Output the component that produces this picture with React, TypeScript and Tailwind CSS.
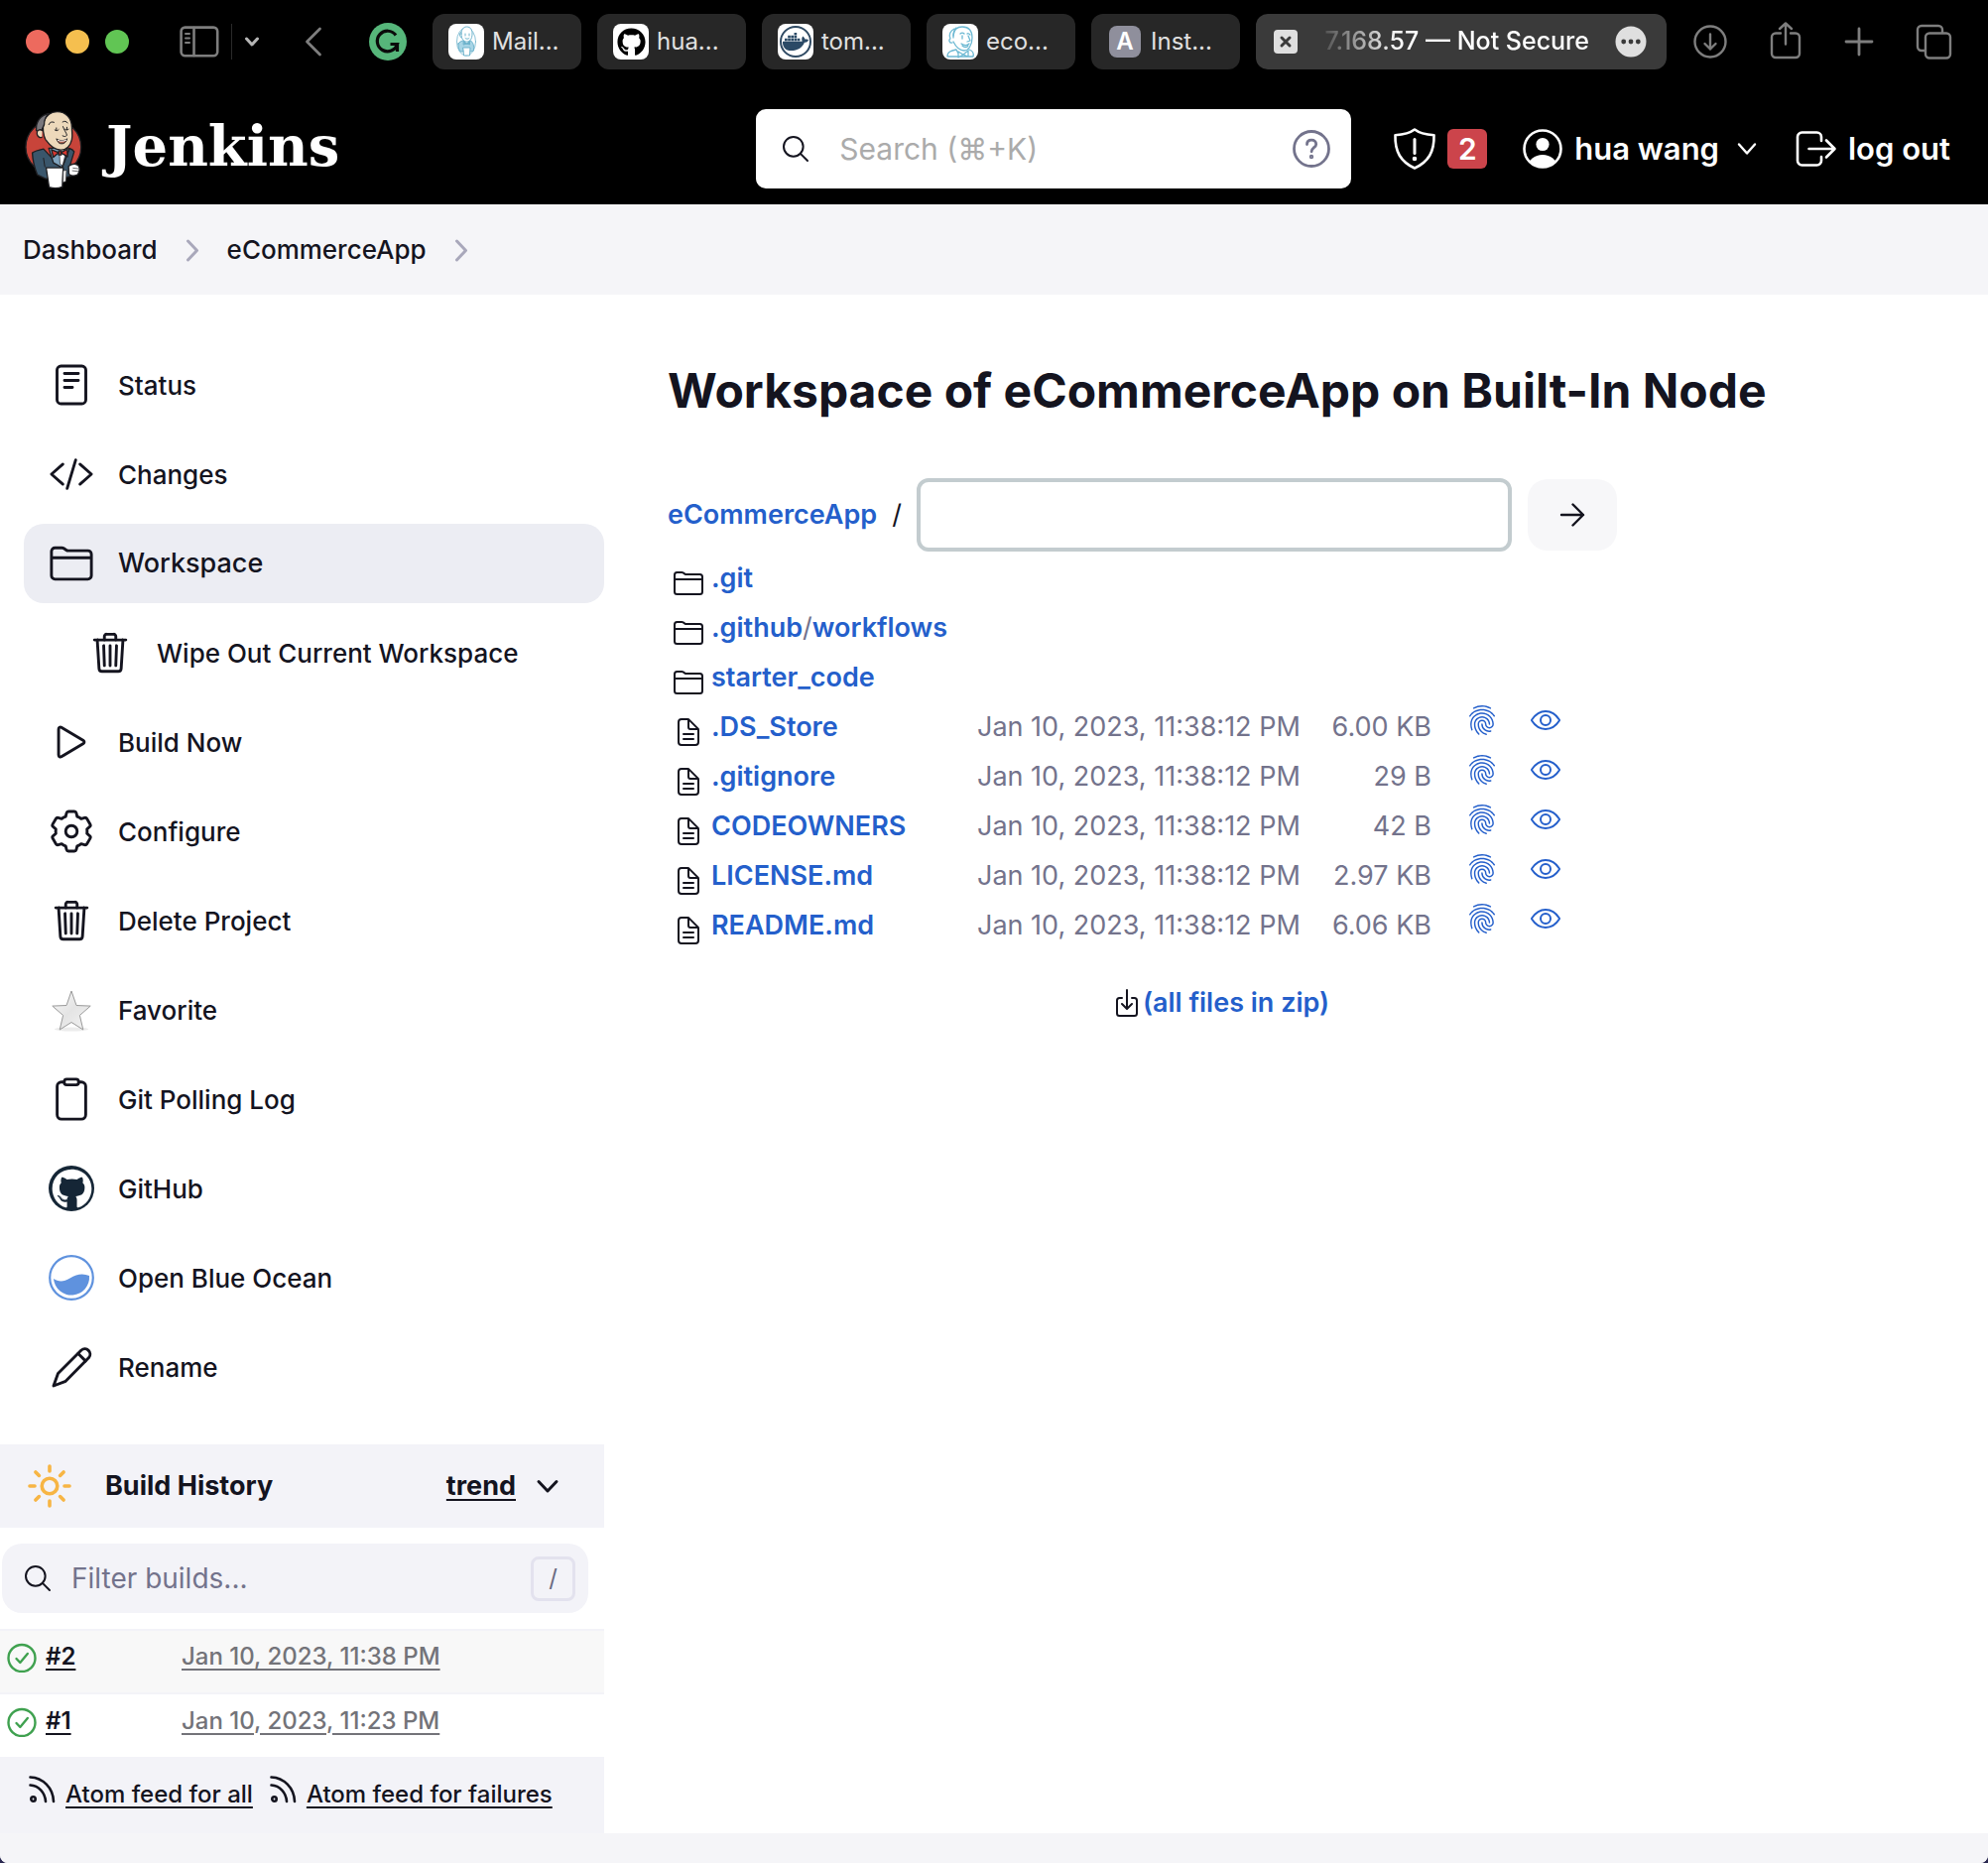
import React from "react";
import {
  IoClipboardOutline,
  IoCodeSlashOutline,
  IoDocumentTextOutline,
  IoDownloadOutline,
  IoEyeOutline,
  IoFingerPrintOutline,
  IoFolderOutline,
  IoPlayOutline,
  IoSearchOutline,
  IoTrashOutline,
} from "react-icons/io5";
import { FaDocker, FaGithub } from "react-icons/fa";

type LineIconProps = {
  box: string;
  stroke?: number;
  className: string;
  children: React.ReactNode;
};

function LineIcon({ box, stroke = 2, className, children }: LineIconProps) {
  return (
    <svg
      viewBox={box}
      className={className}
      fill="none"
      stroke="currentColor"
      strokeWidth={stroke}
      strokeLinecap="round"
      strokeLinejoin="round"
      aria-hidden="true"
    >
      {children}
    </svg>
  );
}

/* ---------- Browser toolbar ---------- */

function ButlerSketchFavicon() {
  return (
    <LineIcon box="0 0 36 36" stroke={1} className="size-9 text-[#6db3cc]">
      <ellipse cx="18" cy="18" rx="9.5" ry="14" strokeWidth=".8" />
      <path d="M13 10c0-4 2-7 5.500-7 4 0 5.500 3 5.500 7 0 5-2 8-5.500 8S13 15 13 10z" fill="#fff" />
      <path d="M13 8c-2 1-2 5 0 6M17 10v2M21 10v2M17 14.500c1 1 3 1 4 0" />
      <path d="M10 20c1-2 4-3 5-3l3.500 3 3.500-3c3 1 4 5 3.500 10l-3 1H12c-2-3-2-5-2-8z" fill="#a8d5e6" />
      <path d="M15 24h7l-.5 8h-5.500z" fill="#fff" />
      <path d="M15.500 18l3 2 3-2v3l-3-1-3 1z" fill="#6db3cc" />
    </LineIcon>
  );
}

function ButlerHeadFavicon() {
  return (
    <LineIcon box="0 0 36 36" stroke={1.3} className="size-9 text-[#6db9d3]">
      <path d="M11 12c0-6 4-9 9-9 7 0 10 4 10 11 0 8-4 13-8 13-6 0-9-5-11-9" />
      <path d="M12 5c-4 2-6 6-4 10-2 1-1 5 2 4M14 4c-3 3-3 6-3 10" />
      <path d="M18 10c1-1 3-1 4 0M25 10c1-1 2 0 3 1M20 12v3M26 12l2 5-3 1M19 20c3 2 6 2 8 0M20 22c2 2 5 2 6 0" />
      <path d="M5 33c0-5 4-6 9-7l2 4M5 33h26c1-4-1-6-4-7M16 28l5 3 5-4v6l-5-2-5 3z" />
    </LineIcon>
  );
}

function DockerFavicon() {
  return (
    <span className="flex size-8 items-center justify-center rounded-full border-2 border-[#2f4a63]">
      <FaDocker className="size-[26px] text-[#2b4a66]" />
    </span>
  );
}

const tabs = [
  { label: "Mail...", icon: <ButlerSketchFavicon /> },
  { label: "hua...", icon: <FaGithub className="size-[29px] text-black" /> },
  { label: "tom...", icon: <DockerFavicon /> },
  { label: "eco...", icon: <ButlerHeadFavicon /> },
];

function BrowserBar() {
  return (
    <div className="flex items-center bg-black pt-3.5 pr-9 pb-6 pl-[26px] text-[#7e7e7e]">
      <div className="flex gap-4">
        <button type="button" aria-label="Close window" className="size-6 rounded-full bg-[#ed6a5e]" />
        <button type="button" aria-label="Minimize window" className="size-6 rounded-full bg-[#f5bf4f]" />
        <button type="button" aria-label="Zoom window" className="size-6 rounded-full bg-[#61c554]" />
      </div>
      <button type="button" aria-label="Sidebar" className="ml-[51px]">
        <LineIcon box="0 0 40 32" stroke={2.6} className="h-8 w-10">
          <rect x="1.6" y="1.6" width="36.6" height="28.6" rx="4" />
          <path d="M14.5 2v28" />
          <path d="M6 8h4M6 12.5h4M6 17h4" strokeWidth="2" />
        </LineIcon>
      </button>
      <span className="ml-3 h-9 w-px bg-[#2a2a2a]" />
      <button type="button" aria-label="Tab groups" className="ml-3 text-[#b5b5b5]">
        <LineIcon box="0 0 16 16" stroke={3} className="size-4">
          <path d="M2.5 5l5.5 6 5.5-6" />
        </LineIcon>
      </button>
      <button type="button" aria-label="Back" className="ml-11">
        <LineIcon box="0 0 20 32" stroke={2.8} className="h-8 w-5">
          <path d="M16.5 3L3.500 16l13 13" />
        </LineIcon>
      </button>
      <button type="button" aria-label="Grammar extension" className="ml-[46px]">
        <svg viewBox="0 0 38 38" className="size-[38px]" aria-hidden="true">
          <circle cx="19" cy="19" r="19" fill="#56b67a" />
          <path
            d="M27 12.500A10.300 10.300 0 1 0 28.500 21.500h-7M28.500 21.500v7.500"
            fill="none"
            stroke="#0a0a0a"
            strokeWidth="3.200"
          />
        </svg>
      </button>
      <div className="ml-[26px] flex flex-1 gap-4">
        {tabs.map((tab) => (
          <button
            key={tab.label}
            type="button"
            className="flex h-14 w-[150px] items-center gap-2 rounded-xl bg-[#272727] pl-4 text-2xl text-[#e0e0e0]"
          >
            <span className="flex size-9 items-center justify-center overflow-hidden rounded-lg bg-white">
              {tab.icon}
            </span>
            {tab.label}
          </button>
        ))}
        <button
          type="button"
          className="flex h-14 w-[150px] items-center gap-2.5 rounded-xl bg-[#272727] pl-[18px] text-2xl text-[#e0e0e0]"
        >
          <span className="flex size-8 items-center justify-center rounded-lg bg-[#8f8f9c] text-2xl font-semibold text-white">
            A
          </span>
          Inst...
        </button>
        <div className="flex h-14 min-w-0 flex-1 items-center rounded-xl bg-[#3a3a3a] pr-5 pl-[18px]">
          <button
            type="button"
            aria-label="Close tab"
            className="flex size-6 items-center justify-center rounded-sm bg-[#dfdfdf] text-[#3a3a3a]"
          >
            <LineIcon box="0 0 16 16" stroke={3} className="size-4">
              <path d="M4 4l8 8M12 4l-8 8" />
            </LineIcon>
          </button>
          <span className="flex-1 [mask-image:linear-gradient(to_right,transparent_5%,black_32%)] pr-[26px] text-right text-[25px] font-medium whitespace-nowrap text-white">
            7.168.57 — Not Secure
          </span>
          <button type="button" aria-label="Page menu">
            <svg viewBox="0 0 32 32" className="size-8" aria-hidden="true">
              <circle cx="16" cy="16" r="15.5" fill="#dfdfdf" />
              <g fill="#3a3a3a">
                <circle cx="8.7" cy="16" r="2.4" />
                <circle cx="16" cy="16" r="2.4" />
                <circle cx="23.3" cy="16" r="2.4" />
              </g>
            </svg>
          </button>
        </div>
      </div>
      <div className="ml-[26px] flex items-center gap-10">
        <button type="button" aria-label="Downloads">
          <LineIcon box="0 0 36 36" stroke={2.4} className="size-9">
            <circle cx="18" cy="18" r="15.5" />
            <path d="M18 10.5v15M12.5 20l5.5 5.5 5.5-5.5" />
          </LineIcon>
        </button>
        <button type="button" aria-label="Share">
          <LineIcon box="0 0 36 40" stroke={2.4} className="h-10 w-9">
            <path d="M13 11.5H8a4 4 0 0 0-4 4V32a4 4 0 0 0 4 4h20a4 4 0 0 0 4-4V15.500a4 4 0 0 0-4-4h-5M18 22.500V1.500M12 7L18 1.500 24 7" />
          </LineIcon>
        </button>
        <button type="button" aria-label="New tab">
          <LineIcon box="0 0 32 32" stroke={2.8} className="size-8">
            <path d="M16 3v26M3 16h26" />
          </LineIcon>
        </button>
        <button type="button" aria-label="Tab overview">
          <LineIcon box="0 0 38 38" stroke={2.4} className="size-[38px]">
            <rect x="11" y="10.500" width="25" height="25" rx="4" />
            <path d="M10.500 28H7a4 4 0 0 1-4-4V7a4 4 0 0 1 4-4h17a4 4 0 0 1 4 4v3" />
          </LineIcon>
        </button>
      </div>
    </div>
  );
}

/* ---------- Jenkins header ---------- */

function JenkinsButler() {
  return (
    <svg viewBox="25 27 176 244" className="h-[81px] w-[59px]" aria-hidden="true">
      <g stroke="#1f1f22" strokeWidth="4" strokeLinejoin="round" strokeLinecap="round">
        <ellipse cx="114" cy="142" rx="84" ry="82" fill="#c8443a" />
        <path d="M50 160c8-6 20-9 34-12l56 60 22-62c6 2 12 5 15 10l-12 40 2 34-30 8H90l-25-12c-8-20-14-44-15-66z" fill="#3a566b" />
        <path d="M100 146l14 44 26 14 22-56-20-4z" fill="#7fa3bd" />
        <path d="M132 150l2 44 8 4 8-32-6-16z" fill="#fff" strokeWidth="2" />
        <path d="M84 66c8-20 24-31 42-31 26 0 44 20 44 48 0 14 3 24 0 36-4 18-16 33-34 32-22-1-36-18-46-32-6-10-10-36-6-53z" fill="#edd9bb" />
        <path d="M62 92c-2-26 12-46 38-52-12 12-14 22-14 34l-10 22z" fill="#79777c" />
        <path d="M80 92c-8-6-17 0-16 9 1 8 8 15 15 11" fill="#edd9bb" />
        <path d="M100 74c2-7 9-10 16-7M142 66c6-4 12-2 15 3M118 90c4 4 9 3 12-1M123 84v7M149 88c4 3 8 2 11 0M155 82v8M143 80c3 10 10 18 12 26-3 5-8 5-13 2" fill="none" strokeWidth="3" />
        <path d="M124 118c10 6 22 6 32-1-3 10-10 16-18 15-7 0-11-5-14-14z" fill="#a9604f" strokeWidth="3" />
        <path d="M128 122c8 3 18 3 25-1" fill="none" stroke="#fff" strokeWidth="3" />
        <path d="M108 150l22 9-16 14zM156 149l-20 10 21 12zM130 154h8v12h-8z" fill="#d8372f" />
        <path d="M92 205h52l-3 58c-12 5-28 5-40 1z" fill="#fff" />
        <path d="M144 214l10-2-2 34-9 4z" fill="#e4e4e4" strokeWidth="2" />
        <path d="M160 200c12-8 24-8 31 0 4 8 2 18-4 26-10 5-20 3-26-2z" fill="#fff" />
        <path d="M174 206l16 2M172 214l17 2" fill="none" strokeWidth="2" />
        <path d="M84 176l4 26" fill="none" strokeWidth="3" />
      </g>
    </svg>
  );
}

function Header() {
  return (
    <header className="flex h-28 items-center bg-black pr-[38px] pl-6 text-white">
      <a href="#home" className="flex items-center gap-6">
        <JenkinsButler />
        <span className="pb-1.5 font-['DejaVu_Serif',serif] text-[56px] leading-none font-bold">Jenkins</span>
      </a>
      <label className="ml-auto flex h-20 w-[600px] items-center rounded-[10px] bg-white px-5">
        <IoSearchOutline className="mx-1 size-8 text-[#14141f]" aria-hidden="true" />
        <input
          type="search"
          aria-label="Search"
          placeholder="Search (⌘+K)"
          className="ml-6 min-w-0 flex-1 bg-transparent text-3xl outline-none placeholder:text-[#ababab] placeholder:opacity-100"
        />
        <LineIcon box="0 0 40 40" stroke={2.8} className="size-10 text-[#73738c]">
          <circle cx="20" cy="20" r="17.5" />
          <path d="M15.5 15.500c0-2.800 2-4.300 4.600-4.300s4.600 1.600 4.600 4.200c0 3.200-4.600 3.500-4.600 7.400" />
          <circle cx="20" cy="28" r=".8" fill="currentColor" />
        </LineIcon>
      </label>
      <div className="ml-[42px] flex items-center gap-[11px]">
        <a href="#security" aria-label="Security warnings">
          <LineIcon box="0 0 44 44" stroke={2.6} className="size-11">
            <path d="M22 2.500c5 3.800 12 5.200 19.500 5.800C42 25 36 35 22 41.500 8 35 2 25 2.500 8.300 10 7.700 17 6.300 22 2.500z" />
            <path d="M22 12.500v14" strokeWidth="3" />
            <circle cx="22" cy="32" r="1" fill="currentColor" />
          </LineIcon>
        </a>
        <span className="flex size-10 items-center justify-center rounded-md bg-[#cc444b] text-3xl font-semibold">2</span>
      </div>
      <a href="#user" className="ml-9 flex items-center gap-3 text-[31px] font-semibold">
        <svg viewBox="0 0 40 40" className="size-10" aria-hidden="true">
          <defs>
            <clipPath id="avatar-ring">
              <circle cx="20" cy="20" r="18.5" />
            </clipPath>
          </defs>
          <circle cx="20" cy="20" r="18.5" fill="none" stroke="#fff" strokeWidth="2.6" />
          <circle cx="20" cy="15.5" r="6.6" fill="#fff" />
          <ellipse cx="20" cy="38" rx="14.5" ry="12" fill="#fff" clipPath="url(#avatar-ring)" />
        </svg>
        hua wang
      </a>
      <button type="button" aria-label="User menu" className="ml-4">
        <LineIcon box="0 0 24 24" stroke={2.4} className="size-6">
          <path d="M4 7.500l8 9 8-9" />
        </LineIcon>
      </button>
      <a href="#logout" className="ml-9 flex items-center gap-2.5 text-[31px] font-semibold">
        <LineIcon box="0 0 44 40" stroke={2.6} className="h-10 w-11">
          <path d="M27 12V8a4.500 4.500 0 0 0-4.500-4.500h-15A4.500 4.500 0 0 0 3 8v24a4.500 4.500 0 0 0 4.500 4.500h15A4.500 4.500 0 0 0 27 32v-4M14.500 20H40M32 11.500l8.500 8.500-8.500 8.500" />
        </LineIcon>
        log out
      </a>
    </header>
  );
}

function Crumbs() {
  const arrow = (
    <LineIcon box="0 0 20 32" stroke={3} className="h-8 w-5 text-[#a9a8bb]">
      <path d="M5.500 7l9 9.500-9 9.500" />
    </LineIcon>
  );
  return (
    <nav
      aria-label="Breadcrumb"
      className="flex h-[91px] items-center gap-[25px] bg-[#f5f5f8] pl-[23px] text-[26px] font-[450]"
    >
      <a href="#dashboard">Dashboard</a>
      {arrow}
      <a href="#project">eCommerceApp</a>
      {arrow}
    </nav>
  );
}

/* ---------- Side panel ---------- */

function StatusIcon() {
  return (
    <LineIcon box="0 0 46 46" stroke={2.9} className="size-[46px]">
      <rect x="8.500" y="4" width="29" height="38" rx="4" />
      <path d="M16 11.500h14M16 18.500h14M16 25.500h8" />
    </LineIcon>
  );
}

function GearIcon() {
  return (
    <LineIcon box="0 0 46 46" stroke={2.9} className="size-[46px]">
      <path d="M20 3h6q1.500 0 1.900 1.500L28.800 8.100q2.200.8 4 2.300L36.300 9.400q1.500-.4 2.300.9L41.900 15.900q.8 1.400-.4 2.400L38.700 20.900q.3 2.100 0 4.200L41.500 27.700q1.200 1 .4 2.400L38.600 35.700q-.8 1.300-2.300.9L32.800 35.600q-1.800 1.500-4 2.300L27.900 41.500q-.4 1.500-1.900 1.500H20q-1.500 0-1.900-1.500L17.200 37.900q-2.200-.8-4-2.300L9.700 36.600q-1.500.4-2.300-.9L4.100 30.100q-.8-1.400.4-2.400L7.300 25.100q-.3-2.100 0-4.200L4.500 18.300q-1.200-1-.4-2.400L7.400 10.300q.8-1.300 2.300-.9L13.200 10.400q1.800-1.500 4-2.300L18.100 4.500Q18.500 3 20 3z" />
      <circle cx="23" cy="23" r="5.800" />
    </LineIcon>
  );
}

function StarIcon() {
  return (
    <svg viewBox="0 0 46 46" className="size-[46px]" aria-hidden="true">
      <defs>
        <linearGradient id="star-fill" x1="0" y1="0" x2="1" y2="1">
          <stop offset="0" stopColor="#fafafa" />
          <stop offset="0.5" stopColor="#e4e4e4" />
          <stop offset="1" stopColor="#f4f4f4" />
        </linearGradient>
      </defs>
      <ellipse cx="23" cy="42.500" rx="17" ry="2" fill="#ececec" />
      <path
        d="M23 4l5 14.500 14.200.6-10.800 9.400 3.400 14.500-11.800-7.500L11.200 43l3.400-14.500L3.800 19.100l14.200-.6z"
        fill="url(#star-fill)"
        stroke="#9a9a9a"
        strokeWidth="1"
      />
    </svg>
  );
}

function GitHubRingIcon() {
  return (
    <span className="flex size-[46px] items-center justify-center rounded-full bg-[#152636]">
      <FaGithub className="size-[41px] text-white" />
    </span>
  );
}

function BlueOceanIcon() {
  return (
    <svg viewBox="0 0 46 46" className="size-[46px]" aria-hidden="true">
      <circle cx="23" cy="23" r="21.800" fill="none" stroke="#5f92de" strokeWidth="2.200" />
      <path d="M5 24c4.500 3 10 3.500 16.500-.5 7-4.500 13.500-5 19.500-2.500A17 17 0 0 1 5 24z" fill="#5f92de" />
    </svg>
  );
}

function PencilIcon() {
  return (
    <LineIcon box="0 0 46 46" stroke={2.9} className="size-[46px]">
      <path d="M5 42l4.500-12.500L33 6a5.400 5.400 0 0 1 7.600 7.600L17.200 37.300z" />
      <path d="M29.800 9.500l7.400 7.400" />
    </LineIcon>
  );
}

type Task = { label: string; icon: React.ReactNode; active?: boolean; nested?: boolean };

const tasks: Task[] = [
  { label: "Status", icon: <StatusIcon /> },
  { label: "Changes", icon: <IoCodeSlashOutline className="size-[46px]" /> },
  { label: "Workspace", icon: <IoFolderOutline className="size-[46px]" />, active: true },
  { label: "Wipe Out Current Workspace", icon: <IoTrashOutline className="size-[46px]" />, nested: true },
  { label: "Build Now", icon: <IoPlayOutline className="size-[46px]" /> },
  { label: "Configure", icon: <GearIcon /> },
  { label: "Delete Project", icon: <IoTrashOutline className="size-[46px]" /> },
  { label: "Favorite", icon: <StarIcon /> },
  { label: "Git Polling Log", icon: <IoClipboardOutline className="size-[46px]" /> },
  { label: "GitHub", icon: <GitHubRingIcon /> },
  { label: "Open Blue Ocean", icon: <BlueOceanIcon /> },
  { label: "Rename", icon: <PencilIcon /> },
];

function TaskList() {
  return (
    <nav aria-label="Project" className="flex flex-col gap-2.5 pl-6 text-[26px] font-[450]">
      {tasks.map((task) => (
        <a
          key={task.label}
          href="#task"
          aria-current={task.active ? "page" : undefined}
          className={
            "flex h-20 items-center gap-6 rounded-[20px] " +
            (task.active
              ? "bg-[#ecedf3] pl-[25px] text-[27px] font-medium"
              : task.nested
                ? "pl-16"
                : "pl-[25px]")
          }
        >
          {task.icon}
          {task.label}
        </a>
      ))}
    </nav>
  );
}

function RssIcon() {
  return (
    <LineIcon box="0 0 28 30" stroke={2.6} className="h-[30px] w-7">
      <circle cx="5.500" cy="24.500" r="2.200" />
      <path d="M2.500 10.500C11 11 17.500 18 18 27M2.500 2.500C15 3 25.500 13 26 27" />
    </LineIcon>
  );
}

const builds = [
  { id: "#2", date: "Jan 10, 2023, 11:38 PM" },
  { id: "#1", date: "Jan 10, 2023, 11:23 PM" },
];

function BuildHistory() {
  return (
    <section aria-label="Build History" className="mt-[38px]">
      <div className="flex h-[84px] items-center bg-[#f3f3f8] pr-[43px] pl-7 text-[27px] font-bold">
        <LineIcon box="0 0 44 44" stroke={3.6} className="size-11 text-[#f7b544]">
          <circle cx="22" cy="22" r="7.800" />
          <path d="M22 2v5M22 37v5M2 22h5M37 22h5M7.900 7.900l3.500 3.500M32.600 32.600l3.500 3.500M36.100 7.900l-3.500 3.500M11.400 32.600l-3.500 3.500" />
        </LineIcon>
        <h2 className="ml-[34px]">Build History</h2>
        <a href="#trend" className="ml-auto underline decoration-2 underline-offset-4">
          trend
        </a>
        <button type="button" aria-label="Collapse build history" className="ml-[18px]">
          <LineIcon box="0 0 28 28" stroke={3} className="size-7">
            <path d="M5 9.500l9 9.500 9-9.500" />
          </LineIcon>
        </button>
      </div>
      <label className="mt-4 mr-4 mb-4 ml-0.5 flex h-[70px] items-center rounded-[20px] bg-[#f3f3f8] pr-[13px] pl-5">
        <IoSearchOutline className="size-8" aria-hidden="true" />
        <input
          type="search"
          aria-label="Filter builds"
          placeholder="Filter builds..."
          className="ml-[18px] min-w-0 flex-1 bg-transparent text-[28px] outline-none placeholder:text-[#73738c] placeholder:opacity-100"
        />
        <kbd className="flex h-[45px] w-[45px] items-center justify-center rounded-lg border-3 border-[#e3e2ee] font-[Inter,sans-serif] text-2xl text-[#6a6a80]">
          /
        </kbd>
      </label>
      <table className="w-full text-left text-2xl">
        <tbody>
          {builds.map((build) => (
            <tr key={build.id} className="h-16 border-t-2 border-[#f3f3f8] odd:bg-[#f8f8f8]">
              <td className="w-[183px] pb-2.5 pl-1.5">
                <a href="#build" className="flex items-center gap-2">
                  <LineIcon box="0 0 32 32" stroke={2.4} className="size-8 text-[#3fa14f]">
                    <circle cx="16" cy="17.500" r="13.5" />
                    <path d="M10.500 18l3.800 4 7.500-9" />
                  </LineIcon>
                  <span className="font-semibold underline decoration-2 underline-offset-4">{build.id}</span>
                </a>
              </td>
              <td className="pb-2.5">
                <a href="#build" className="font-medium text-[#737379] underline decoration-2 underline-offset-4">
                  {build.date}
                </a>
              </td>
            </tr>
          ))}
        </tbody>
      </table>
      <div className="flex h-[77px] bg-[#f3f3f8] pt-[18px] pl-7 text-2xl font-medium">
        <a href="#rss-all" className="flex gap-2.5">
          <RssIcon />
          <span className="pt-1 underline decoration-2 underline-offset-4">Atom feed for all</span>
        </a>
        <a href="#rss-failures" className="ml-4 flex gap-2.5">
          <RssIcon />
          <span className="pt-1 underline decoration-2 underline-offset-4">Atom feed for failures</span>
        </a>
      </div>
    </section>
  );
}

/* ---------- Workspace browser ---------- */

const stamp = "Jan 10, 2023, 11:38:12 PM";
const folders = [[".git"], [".github", "workflows"], ["starter_code"]];
const files = [
  { name: ".DS_Store", size: "6.00 KB" },
  { name: ".gitignore", size: "29 B" },
  { name: "CODEOWNERS", size: "42 B" },
  { name: "LICENSE.md", size: "2.97 KB" },
  { name: "README.md", size: "6.06 KB" },
];

function Workspace() {
  return (
    <main className="min-w-0 flex-1 pt-[68px] pl-16">
      <h1 className="text-5xl leading-[58px] font-bold whitespace-nowrap">
        Workspace of eCommerceApp on Built-In Node
      </h1>
      <form className="mt-[59px] flex items-center text-[27px]">
        <a href="#root" className="font-semibold text-[#245fcb]">
          eCommerceApp
        </a>
        <span className="mx-[15px]">/</span>
        <input
          type="text"
          aria-label="Path"
          className="h-[74px] w-[600px] rounded-xl border-4 border-[#c3cccf] bg-white px-4 outline-none"
        />
        <button
          type="submit"
          aria-label="Open path"
          className="ml-4 flex h-[72px] w-[90px] items-center justify-center rounded-[20px] bg-[#f7f7f9]"
        >
          <LineIcon box="0 0 28 28" stroke={2.4} className="size-7">
            <path d="M3 14h22M14.500 3.500L25 14 14.500 24.500" />
          </LineIcon>
        </button>
      </form>
      <table className="mt-0.5 w-[1114px] table-fixed text-[27px] text-[#73738c]">
        <colgroup>
          <col className="w-11" />
          <col className="w-[268px]" />
          <col className="w-[322px]" />
          <col className="w-[136px]" />
          <col className="w-[67px]" />
          <col />
        </colgroup>
        <tbody>
          {folders.map((parts) => (
            <tr key={parts[0]} className="h-[50px]">
              <td className="pt-2.5 pl-[5px]">
                <IoFolderOutline className="size-8 text-[#14141f]" />
              </td>
              <td colSpan={5}>
                {parts.map((part, i) => (
                  <React.Fragment key={part}>
                    {i > 0 && "/"}
                    <a href="#folder" className="font-semibold text-[#245fcb]">
                      {part}
                    </a>
                  </React.Fragment>
                ))}
              </td>
            </tr>
          ))}
          {files.map((file) => (
            <tr key={file.name} className="h-[50px]">
              <td className="pt-2.5 pl-[5px]">
                <IoDocumentTextOutline className="size-8 text-[#14141f]" />
              </td>
              <td>
                <a href="#file" className="font-semibold text-[#245fcb]">
                  {file.name}
                </a>
              </td>
              <td className="text-right whitespace-nowrap">{stamp}</td>
              <td className="text-right">{file.size}</td>
              <td className="pb-3.5 pl-[35px]">
                <a href="#fingerprint" aria-label={"Fingerprint of " + file.name} className="block size-8">
                  <IoFingerPrintOutline className="size-8 text-[#245fcb]" />
                </a>
              </td>
              <td className="pb-3.5 pl-8">
                <a href="#view" aria-label={"View " + file.name} className="block size-8">
                  <IoEyeOutline className="size-8 text-[#245fcb]" />
                </a>
              </td>
            </tr>
          ))}
          <tr>
            <td colSpan={6} className="pt-[33px]">
              <a href="#zip" className="flex items-center justify-center font-semibold text-[#245fcb]">
                <IoDownloadOutline className="size-8 text-[#14141f]" />
                (all files in zip)
              </a>
            </td>
          </tr>
        </tbody>
      </table>
    </main>
  );
}

export default function App() {
  return (
    <div className="min-h-screen bg-[#2a2850] font-[Inter,'DejaVu_Sans',sans-serif] text-[#14141f]">
      <div className="flex min-h-screen flex-col overflow-hidden rounded-b-lg bg-white">
        <BrowserBar />
        <Header />
        <Crumbs />
        <div className="flex flex-1">
          <aside className="w-[609px] shrink-0 pt-[51px]">
            <TaskList />
            <BuildHistory />
          </aside>
          <Workspace />
        </div>
        <footer className="h-[30px] bg-[#f5f5f8]" />
      </div>
    </div>
  );
}
